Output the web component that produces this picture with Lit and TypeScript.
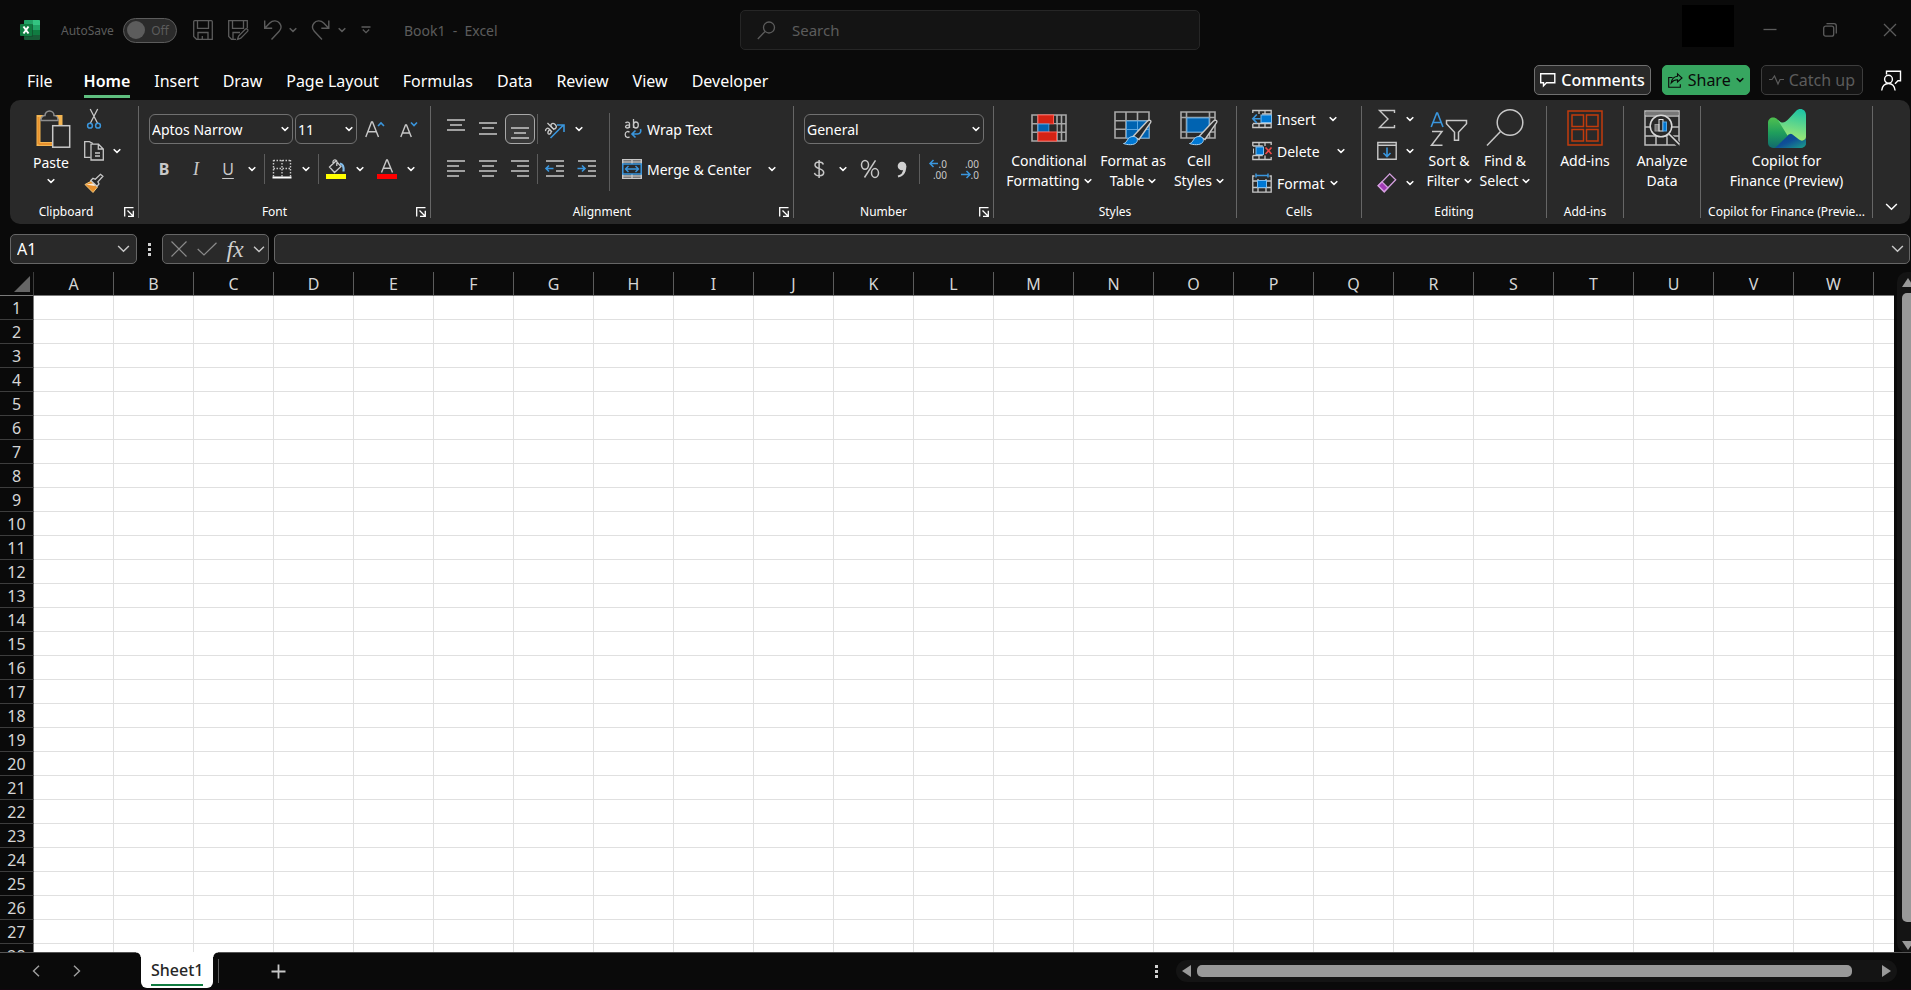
import { LitElement, html, css, svg } from "lit";
import { customElement } from "lit/decorators.js";

const chev = (w = 8) => html`<svg class="chev" width=${w} height=${w * 0.75} viewBox="0 0 8 6" aria-hidden="true">
  <path d="M.7 1.2 4 4.4 7.3 1.2" fill="none" stroke="currentColor" stroke-width=${w > 8 ? 0.9 : 1.5} /></svg>`;

const icon = (w: number, h: number, body: unknown) =>
  html`<svg width=${w} height=${h} viewBox="0 0 ${w} ${h}" fill="none" stroke="currentColor" aria-hidden="true">${body}</svg>`;

const BLUE = "#3a96dd";
const FILL = "#0063b1";
const INK = "#292929";

const icons = {
  excel: icon(20, 20, svg`<g stroke="none">
    <rect x="4" y="0" width="16" height="20" rx="1" fill="#185c37"/><path d="M4 1a1 1 0 0 1 1-1h7.500v5H4z" fill="#21a366"/>
    <path d="M12.500 0H19a1 1 0 0 1 1 1v4h-7.500z" fill="#33c481"/><path d="M4 5h8.500v5H4z" fill="#107c41"/>
    <path d="M12.500 5H20v5h-7.500z" fill="#21a366"/><path d="M12.500 10H20v5h-7.500z" fill="#107c41"/>
    <path d="M4 4h9v13H4z" fill="#0b4a2a" opacity=".5"/>
    <rect x="0" y="4" width="12" height="12" rx="1" fill="#107c41"/></g>
    <path d="M3.500 6.500 8.500 13.500M8.500 6.500 3.500 13.500" stroke="#fff" stroke-width="2"/>`),
  save: icon(20, 20, svg`<path d="M.7 1.700a1 1 0 0 1 1-1h16.600a1 1 0 0 1 1 1v17.600H3.500L.7 16.500z M4.500.7v7.600h11V.7M5 19.300v-6.800h10v6.800M9.300 19v-3" stroke-width="1.300"/>`),
  saveEdit: icon(20, 20, svg`<path d="M19.300 8V.7H.7v15.800l2.800 2.800H8M4.500.7v7.600h11V.7M5 19.300v-6.800h7" stroke-width="1.300"/>
    <path d="M9.500 19.500 10.600 16 17.500 9a1.600 1.600 0 0 1 2.200 2.200L12.800 18.200z" stroke-width="1.300"/>`),
  undo: icon(20, 20, svg`<path d="M1.700.5v7.700h7.500M2 8 6.800 3C10-.2 14.500.6 16.600 3.200c2 2.600 1.800 5.600-.4 8L8.500 19.500" stroke-width="1.400"/>`),
  redo: icon(20, 20, svg`<path d="M16.800.5v7.700H9.300M16.500 8 11.700 3C8.500-.2 4 .6 1.900 3.200c-2 2.600-1.800 5.600.4 8L10 19.500" stroke-width="1.400"/>`),
  custom: icon(10, 8, svg`<path d="M.5 1h9M1.800 3.500 5 6.700 8.200 3.500" stroke-width="1.300"/>`),
  search: icon(19, 19, svg`<circle cx="12" cy="6.500" r="5.500" stroke-width="1.300"/><path d="M8 10.500.8 18" stroke-width="1.300"/>`),
  min: icon(14, 14, svg`<path d="M.5 6.500h13" stroke-width="1.300"/>`),
  restore: icon(14, 14, svg`<rect x=".7" y="3.200" width="10" height="10" rx="2" stroke-width="1.300"/><path d="M3.500.7H11A2.300 2.300 0 0 1 13.300 3v7.500" stroke-width="1.300"/>`),
  close: icon(14, 14, svg`<path d="M1 1l12 12M13 1 1 13" stroke-width="1.300"/>`),
  comment: icon(16, 16, svg`<path d="M.7 1.700h14.100v9H6.500l-3 3v-3H.7z" stroke-width="1.400"/>`),
  share: icon(15, 15, svg`<path d="M4.500 4.500H.7v9.800h11.600v-3M9.500.8 14 5 9.500 9V6.700C6.500 6.700 5 7.500 3.200 9.800 3.800 6 6 3.500 9.500 3.200z" stroke-width="1.100"/>`),
  pulse: icon(15, 12, svg`<path d="M0 5.500h3L5.500 2 9 10l2-4.500h4" stroke-width="1.200"/>`),
  person: icon(20, 21, svg`<path d="M5.500 4.500V1.200h14v9.600H17l-3 3" stroke-width="1.400"/><circle cx="7.500" cy="9.200" r="3.900" stroke-width="1.400"/><path d="M.7 20.500c.6-4.500 3-7 6.800-7s6 2.500 6.600 7" stroke-width="1.400"/>`),
  paste: icon(36, 38, svg`<rect x="2.500" y="7" width="22" height="27" stroke="#f3b552" stroke-width="4"/>
    <path d="M5 10.500V9.500a4 4 0 0 1 4-4 4.500 4.500 0 0 1 9 0 4 4 0 0 1 4 4v1z" fill="${INK}" stroke="#8e8e8e" stroke-width="1.500"/>
    <path d="M2.500 7v27M2.500 34h14" stroke="#e8912d" stroke-width="2"/>
    <rect x="16.700" y="15.700" width="17" height="21.500" fill="${INK}" stroke="#c8c8c8" stroke-width="1.500"/>`),
  cut: icon(20, 20, svg`<path d="M6.200 0 13.700 14.500M13.700 0 6.200 14.500" stroke="#c8c8c8" stroke-width="1.300"/>
    <circle cx="6" cy="16.700" r="2.400" stroke="${BLUE}" stroke-width="1.500"/><circle cx="14" cy="16.700" r="2.400" stroke="${BLUE}" stroke-width="1.500"/>`),
  copy: icon(20, 20, svg`<path d="M6.500 16.300H.7V.7h4.600L9 2.500" stroke="#c8c8c8" stroke-width="1.300"/>
    <path d="M7 3.200h7.500l4.800 4.800v11H7z M14.300 3.200V8h5M11 12h5M11 15h5" stroke="#c8c8c8" stroke-width="1.300"/>`),
  painter: icon(20, 20, svg`<path d="M1 11.500 7.500 8l6 6-4.500 5.500z" fill="#e8912d" stroke="#f3c77b" stroke-width="1"/><path d="M2 11.500 12 10l-1.500 3z" fill="#fff" opacity=".8" stroke="none"/>
    <path d="M6.800 7.500 9 5.300l2.300 1 5.200-5 2.400 2-5 5.500L15 11l-2 2.300z" fill="${INK}" stroke="#c8c8c8" stroke-width="1.300"/>`),
  launch: icon(10, 10, svg`<path d="M.7 9.500V.7h8.800M3.500 3.500l5 5M9.300 3.800v5.500H4" stroke-width="1.300"/>`),
  grow: icon(20, 20, svg`<path d="M.8 18 6.500 3h1L13.500 18M3 12.700h8.500" stroke="#c8c8c8" stroke-width="1.400"/><path d="M13 7l3-3 3 3" stroke="${BLUE}" stroke-width="1.600"/>`),
  shrink: icon(20, 20, svg`<path d="M1.800 18 6.500 6h1L12.300 18M3.500 14h7" stroke="#c8c8c8" stroke-width="1.400"/><path d="M12 3.500l3 3 3-3" stroke="${BLUE}" stroke-width="1.600"/>`),
  borders: icon(20, 20, svg`<path d="M1.500 1.500h17M1.500 9.500h17M1.500 1v17M10 1v17M18.500 1v17" stroke="#c8c8c8" stroke-width="1.400" stroke-dasharray="1.500 1.500"/><path d="M.5 18.500h19" stroke="#fff" stroke-width="2"/>`),
  bucket: icon(20, 20, svg`<rect x="0" y="15" width="20" height="5" fill="#ff0" stroke="none"/>
    <path d="M3.500 8 10 2l5 5.500-6.500 6z M7 6V2.500A2 2 0 0 1 10.800 2v5" stroke="#c8c8c8" stroke-width="1.300"/><path d="M14 4.500c3 .5 4 3.500 3.500 8" stroke="#83beec" stroke-width="2.200"/>`),
  fontColor: icon(20, 20, svg`<rect x="0" y="15" width="20" height="5" fill="#f00" stroke="none"/><path d="M4.500 13.500 9.600 1h.8l5.100 12.500M6.300 9.200h7.400" stroke="#c8c8c8" stroke-width="1.400"/>`),
  orient: icon(22, 20, svg`<path d="M6.500 19 19 6.500M13 6h7v7" stroke="${BLUE}" stroke-width="1.600"/>
    <g transform="rotate(-45 7 9)" stroke="#c8c8c8" stroke-width="1.300"><path d="M1 7.300c1-1.500 4-1.400 4 .8V12.500M5 9.200c-5 0-5 3.300-2.300 3.300 1.400 0 2.300-1 2.300-2.300M8 3v9.500"/><ellipse cx="10.200" cy="9.500" rx="2.200" ry="3"/></g>`),
  wrap: icon(20, 20, svg`<g stroke="#c8c8c8" stroke-width="1.300"><path d="M3.500 4c1-1.300 4-1.300 4 .8V9M7.500 5.800c-5 0-4.600 3.200-2.200 3.200 1.300 0 2.200-1 2.200-2.200M11.500 0v9"/><ellipse cx="13.900" cy="6" rx="2.400" ry="3"/><path d="M7.500 13.300c-1.500-1.500-4.300-.7-4.300 2.200s2.800 3.700 4.300 2.200"/></g>
    <path d="M18.500 10c1 3-.5 5-3 5h-5M13.500 11.500 10 15l3.500 3.500" stroke="${BLUE}" stroke-width="1.600"/>`),
  merge: icon(20, 20, svg`<path d="M.7.700h18.600v18.600H.7zM10 .7V5M10 15v4.300M.7 3h18.600M.7 17h18.600" stroke="#c8c8c8" stroke-width="1.400"/>
    <rect x=".8" y="5" width="18.400" height="10" fill="${INK}" stroke="${BLUE}" stroke-width="1.500"/><path d="M3.500 10h13M6.500 7l-3 3 3 3M13.500 7l3 3-3 3" stroke="${BLUE}" stroke-width="1.400"/>`),
  percent: icon(20, 20, svg`<ellipse cx="5" cy="5.800" rx="3.500" ry="4.400" stroke="#c8c8c8" stroke-width="1.500"/><ellipse cx="15" cy="14" rx="3.500" ry="4.400" stroke="#c8c8c8" stroke-width="1.500"/><path d="M15.500 1.300 4.500 18.500" stroke="#c8c8c8" stroke-width="1.500"/>`),
  dollar: icon(12, 20, svg`<path d="M10.300 5.500C9.600 2.300 2 1.700 2 5.900c0 4.300 8.700 3.200 8.700 7.700 0 4.300-8.400 4.100-9.200.3M6.100 1v18" stroke="#c8c8c8" stroke-width="1.500"/>`),
  comma: icon(12, 18, svg`<path d="M2 16.500c4-1 6-3 6.500-6" stroke="#d0d0d0" stroke-width="2"/><circle cx="6" cy="6" r="4.300" fill="#d0d0d0" stroke="none"/><path d="M10.300 6c0 4-1 7.500-5 9.500l2-6z" fill="#d0d0d0" stroke="none"/>`),
  cond: icon(36, 28, svg`<path d="M1 1h34v26H1zM1 9.700h34M1 18.300h34M7 1v26M26 1v26M30.500 1v26" stroke="#a8a8a8" stroke-width="1.600"/>
    <rect x="7" y="1" width="15.500" height="9" fill="#d42314" stroke="#ff5a50"/><rect x="7" y="10" width="11" height="8" fill="${FILL}" stroke="#59a5e0"/><rect x="18.500" y="10.500" width="7" height="7.300" fill="${INK}" stroke="none"/><rect x="7" y="18" width="18.500" height="9" fill="#d42314" stroke="#ff5a50"/>`),
  table: icon(38, 34, svg`<path d="M1 1h34v26H1zM1 9.700h34M1 18.300h34M12 1v26M23.500 1v26" stroke="#a8a8a8" stroke-width="1.600"/>
    <rect x="12.500" y="10" width="22.500" height="17" fill="${FILL}" stroke="#59a5e0"/><path d="M12.500 18.500H35M23.500 10v17" stroke="#59a5e0"/>
    <path d="M19 25.500 33 10.500c2-2 5-1.500 3.500 1.200L25 28.500z" fill="${INK}" stroke="#c8c8c8" stroke-width="1.400"/><path d="M9.500 32.500c4-.5 3.500-7 9.500-7 4 0 5.500 3.500 3.500 6-2.500 3-9 2.500-13 1z" fill="#0078d4" stroke="#a9d3f2" stroke-width="1"/>`),
  cell: icon(38, 34, svg`<path d="M1 1h34v26H1zM6.500 1v26M1 6.500h34M1 21h34M29.500 1v26" stroke="#a8a8a8" stroke-width="1.600"/>
    <rect x="7" y="7" width="22" height="14" fill="${FILL}" stroke="#59a5e0"/>
    <path d="M19 25.500 33 10.500c2-2 5-1.500 3.500 1.200L25 28.500z" fill="${INK}" stroke="#c8c8c8" stroke-width="1.400"/><path d="M9.500 32.500c4-.5 3.500-7 9.500-7 4 0 5.500 3.500 3.500 6-2.500 3-9 2.500-13 1z" fill="#0078d4" stroke="#a9d3f2" stroke-width="1"/>`),
  insert: icon(20, 20, svg`<path d="M.8 4V1.500h18.400v17H.8V15M7 1.500V5M13 1.500V5M7 14.500v4M13 14.500v4M.8 14.500h18.400M10 5h9" stroke="#c8c8c8" stroke-width="1.300"/>
    <rect x="9" y="6" width="10.500" height="7.500" fill="#0078d4" stroke="#7dbdf0"/><path d="M.8 9.700h8M4.800 5.500.8 9.700l4 4.200" stroke="${BLUE}" stroke-width="1.600"/>`),
  del: icon(20, 20, svg`<path d="M.8 5V1.500h18.400V4M.8 14.500v4h18.400V16M7 1.500V5M13 1.500V5M7 14.500v4M13 14.500v4M.8 5h10M.8 14.500h10" stroke="#c8c8c8" stroke-width="1.300"/>
    <rect x="4" y="6" width="7.500" height="7.500" fill="#0078d4" stroke="#7dbdf0"/><path d="M1.500 7.500v5" stroke="#c8c8c8"/><path d="M13.500 6.500l6 6.500M19.500 6.500l-6 6.500" stroke="#f04a4a" stroke-width="1.600"/>`),
  format: icon(20, 20, svg`<path d="M4 .5v4M16 .5v4M4 2.500h12" stroke="${BLUE}" stroke-width="1.500"/><path d="M2.500 3H.8v16.200h18.400V3h-1.700M6 6v13M14 6v13M.8 8h18.400M.8 14.500h18.400" stroke="#c8c8c8" stroke-width="1.300"/>
    <rect x="5.500" y="7.500" width="9" height="7" fill="#0078d4" stroke="#7dbdf0"/>`),
  sigma: icon(20, 20, svg`<path d="M17.500 4V1.500h-15L11 10 2.500 18.500h15V16" stroke="#c8c8c8" stroke-width="1.400"/>`),
  fillDown: icon(20, 20, svg`<path d="M.8 1.500h18.400v16.800H.8zM.8 4.300h18.400" stroke="#c8c8c8" stroke-width="1.400"/><path d="M10 6.500v9M6.500 12l3.500 3.500 3.500-3.500" stroke="${BLUE}" stroke-width="1.600"/>`),
  eraser: icon(20, 20, svg`<path d="M1.200 12.800 12.700.9l6 5.800L7.200 18.700z" stroke="#d59fe0" stroke-width="1.300"/><path d="M1.200 12.800 5 8.900l6 5.800-3.800 4z" fill="#a13bb5" stroke="#d59fe0" stroke-width="1.300"/>`),
  sort: icon(38, 36, svg`<path d="M1.200 17 6.700 3h.8L13 17M3.200 12.500H11" stroke="${BLUE}" stroke-width="1.600"/><path d="M2 21.500h10L1.500 35.200H12.500" stroke="#c8c8c8" stroke-width="1.500"/>
    <path d="M16.500 10.500h20v3.300l-8 8.500v8h-4v-8l-8-8.500z" stroke="#c8c8c8" stroke-width="1.500"/>`),
  find: icon(38, 38, svg`<circle cx="24" cy="13.500" r="12.800" stroke="#c8c8c8" stroke-width="1.500"/><path d="M14.500 22.500 1 36.500" stroke="#c8c8c8" stroke-width="1.500"/>`),
  addins: icon(36, 36, svg`<g stroke="#c23b0c" stroke-width="1.500"><rect x="1" y="1" width="34" height="34"/><rect x="5" y="5" width="11.500" height="11.500"/><rect x="19.500" y="5" width="11.500" height="11.500"/><rect x="5" y="19.500" width="11.500" height="11.500"/><rect x="19.500" y="19.500" width="11.500" height="11.500"/></g>`),
  analyze: icon(36, 36, svg`<path d="M1 1h34v34H1zM1 6h34M1 17h34M1 26h34M12 26v9M23 26v9" stroke="#bdbdbd" stroke-width="1.500"/><path d="M1.500 3.500h33" stroke="#777" stroke-width="3"/>
    <path d="M25 25 35.500 35.500" stroke="${INK}" stroke-width="5"/><circle cx="17" cy="16" r="10.800" fill="${INK}" stroke="#d8d8d8" stroke-width="1.500"/><path d="M25 24 35.500 34.500" stroke="#d8d8d8" stroke-width="1.600"/>
    <rect x="11" y="14.500" width="4" height="6.500" fill="#777" stroke="#999"/><rect x="15" y="9.500" width="4" height="11.500" stroke="#e8e8e8"/><rect x="19" y="12" width="3.500" height="9" fill="#0078d4" stroke="#59a5e0"/>`),
  copilot: icon(38, 39, svg`<defs>
    <linearGradient id="l" x1="0" y1="0" x2="0" y2="1"><stop offset="0" stop-color="#4fc04f"/><stop offset=".5" stop-color="#1f9e5c"/><stop offset="1" stop-color="#116a6e"/></linearGradient>
    <linearGradient id="r" x1=".7" y1="0" x2=".5" y2="1"><stop offset="0" stop-color="#1cc3a4"/><stop offset="1" stop-color="#a6ea72"/></linearGradient>
    <linearGradient id="b" x1="0" y1="0" x2="1" y2="1"><stop offset="0" stop-color="#0a3f8f"/><stop offset=".5" stop-color="#0f4f96"/><stop offset="1" stop-color="#1ca08a"/></linearGradient></defs>
    <g stroke="none"><path d="M0 14C0 8.500 6 7 9.500 10.500L38 34a5 5 0 0 1-5 5H5a5 5 0 0 1-5-5z" fill="url(#l)"/>
    <path d="M7 39 20 26.500c3-3 5-2 8 1l3.500 3c2.500 2 6.500.5 6.500-2V34a5 5 0 0 1-5 5z" fill="url(#b)"/>
    <path d="M9.500 10.500c4 4.500 7 4 11.500-1L28 2c4-4 10-1.500 10 4v22c0 3-4 5-7 2.500L24.500 25.500c-2-1.500-4 0-5 1L9.500 10.500z" fill="url(#r)"/></g>`),
  cross: icon(18, 18, svg`<path d="M1.500 1.500l15 15M16.500 1.500l-15 15" stroke-width="1.200"/>`),
  tick: icon(20, 14, svg`<path d="M.7 7 7 13 19.500.7" stroke-width="1.200"/>`),
  plus: icon(15, 15, svg`<path d="M7.500.5v14M.5 7.500h14" stroke-width="1.800"/>`),
  prev: icon(8, 12, svg`<path d="M7 .7 1.500 6 7 11.300" stroke-width="1.400"/>`),
  next: icon(8, 12, svg`<path d="M1 .7 6.500 6 1 11.300" stroke-width="1.400"/>`),
};

/** Stack of rules used by the alignment icons: each entry is [x1, x2, y]. */
const lines = (rows: number[][], extra: unknown = "") =>
  icon(20, 20, svg`${rows.map(([a, b, y]) => svg`<path d="M${a} ${y}H${b}" stroke="#c8c8c8" stroke-width="1.500"/>`)}${extra}`);

const indent = (dir: string) =>
  lines([[1, 19, 2], [11, 19, 7], [11, 19, 12], [1, 19, 17]], svg`<path d=${dir} stroke=${BLUE} stroke-width="1.600"/>`);

const align = {
  top: lines([[1, 19, 1], [4, 16, 6], [1, 19, 11]]),
  middle: lines([[1, 19, 4], [4, 16, 9], [1, 19, 15]]),
  bottom: lines([[1, 19, 9], [4, 16, 14], [1, 19, 19]]),
  left: lines([[1, 19, 2], [1, 13, 7], [1, 19, 12], [1, 13, 17]]),
  center: lines([[1, 19, 2], [4, 16, 7], [1, 19, 12], [4, 16, 17]]),
  right: lines([[1, 19, 2], [7, 19, 7], [1, 19, 12], [7, 19, 17]]),
  outdent: indent("M8.500 9.500H1M4 6.500l-3 3 3 3"),
  indent: indent("M.5 9.500H8M5 6.500l3 3-3 3"),
};

const TABS = ["File", "Home", "Insert", "Draw", "Page Layout", "Formulas", "Data", "Review", "View", "Developer"];
const COLUMNS = Array.from("ABCDEFGHIJKLMNOPQRSTUVWX");
const ROWS = Array.from({ length: 28 }, (_, i) => i + 1);

const base = css`
  * { box-sizing: border-box; }
  button, input, select { font: inherit; color: inherit; background: none; border: 0; padding: 0; margin: 0; outline: 0; }
  button { display: inline-flex; align-items: center; justify-content: center; white-space: nowrap; }
  svg { display: block; flex: none; overflow: visible; }
`;

@customElement("title-bar")
class TitleBar extends LitElement {
  static styles = [base, css`
    :host { display: grid; grid-template-columns: minmax(0, 740fr) minmax(0, 460fr) minmax(0, 711fr); align-items: center; height: 60px; color: #5c5c5c; }
    .left { display: flex; align-items: center; padding-left: 20px; }
    .auto { display: flex; align-items: center; gap: 9px; margin: 0 16px 0 21px; font-size: 12px; }
    .switch { display: grid; width: 54px; height: 25px; align-items: center; font-size: 12px; }
    .switch > * { grid-area: 1 / 1; }
    .switch input { appearance: none; width: 54px; height: 25px; border: 1px solid #5c5c5c; border-radius: 13px; background: #2b2b2b; }
    .knob { width: 18px; height: 18px; margin-left: 4px; border-radius: 50%; background: #5c5c5c; }
    .off { justify-self: end; padding-right: 8px; }
    .quick { display: flex; align-items: center; gap: 15px; }
    .pair { display: flex; align-items: center; gap: 6px; }
    .name { margin: 0 0 0 33px; font-size: 14px; font-weight: 400; white-space: pre; }
    .search { display: flex; align-items: center; gap: 16px; height: 40px; padding: 0 16px; border: 1px solid #262626; border-radius: 5px; background: #141414; font-size: 15px; line-height: 20px; }
    .search input { flex: 1; min-width: 0; }
    .search input::placeholder { color: #5c5c5c; opacity: 1; }
    .right { display: flex; justify-content: flex-end; align-items: center; height: 60px; padding-right: 14px; gap: 46px; }
    .account { width: 52px; height: 42px; margin: 0 -17px 8px 0; background: #000; }
  `];

  render() {
    return html`
      <div class="left">
        ${icons.excel}
        <label class="auto">AutoSave
          <span class="switch"><input type="checkbox" role="switch" /><span class="knob"></span><span class="off">Off</span></span>
        </label>
        <div class="quick">
          <button aria-label="Save">${icons.save}</button>
          <button aria-label="Save as">${icons.saveEdit}</button>
          <div class="pair"><button aria-label="Undo">${icons.undo}</button><button aria-label="Undo list">${chev()}</button></div>
          <div class="pair"><button aria-label="Redo">${icons.redo}</button><button aria-label="Redo list">${chev()}</button></div>
          <button aria-label="Customize toolbar">${icons.custom}</button>
        </div>
        <h1 class="name">Book1  -  Excel</h1>
      </div>
      <label class="search">${icons.search}<input type="text" placeholder="Search" aria-label="Search" /></label>
      <div class="right">
        <div class="account"></div>
        <button aria-label="Minimize">${icons.min}</button>
        <button aria-label="Restore">${icons.restore}</button>
        <button aria-label="Close">${icons.close}</button>
      </div>`;
  }
}

@customElement("tab-row")
class TabRow extends LitElement {
  static styles = [base, css`
    :host { display: flex; align-items: center; justify-content: space-between; height: 40px; color: #fff; }
    nav { display: flex; gap: 24px; padding-left: 27px; font-size: 16px; line-height: 24px; }
    a { color: inherit; text-decoration: none; padding: 7px 0 2px; border-bottom: 3px solid transparent; white-space: nowrap; }
    a:first-child { margin-right: 7px; }
    .current { font-weight: 600; border-bottom-color: #5fbf7f; }
    .actions { display: flex; align-items: center; gap: 11px; padding-right: 10px; font-size: 16px; }
    .act { height: 30px; gap: 5px; padding: 0 5px; border: 1px solid #707070; border-radius: 5px; background: #292929; }
    .comments { font-weight: 500; }
    .share { background: #37a660; border-color: #37a660; color: #0a0a0a; }
    .catch { background: #141414; border-color: #3d3d3d; color: #5c5c5c; padding: 0 7px; }
    .person { margin-left: 7px; }
  `];

  render() {
    return html`
      <nav>${TABS.map((t) => html`<a href="#" class=${t === "Home" ? "current" : ""}>${t}</a>`)}</nav>
      <div class="actions">
        <button class="act comments">${icons.comment}Comments</button>
        <button class="act share">${icons.share}Share${chev()}</button>
        <button class="act catch">${icons.pulse}Catch up</button>
        <button class="person" aria-label="Presence">${icons.person}</button>
      </div>`;
  }
}

@customElement("ribbon-bar")
class RibbonBar extends LitElement {
  static styles = [base, css`
    :host { display: flex; margin: 0 1px 0 10px; padding: 6px 0; border-radius: 10px; background: #292929; color: #fff; font-size: 14px; }
    .group { display: flex; flex: none; flex-direction: column; height: 112px; border-right: 1px solid #666; }
    .body { display: flex; flex: 1; min-height: 0; }
    .foot { display: flex; align-items: center; height: 16px; margin-bottom: -2px; font-size: 12px; line-height: 16px; }
    .foot span { flex: 1; min-width: 0; text-align: center; white-space: nowrap; }
    .launch { width: 20px; height: 16px; padding-left: 2px; }
    .g-clip { width: 129px; padding-left: 4px; }
    .g-font { width: 292px; }
    .g-align { width: 363px; }
    .g-num { width: 200px; }
    .g-styles { width: 243px; }
    .g-cells { width: 125px; }
    .g-edit { width: 185px; }
    .g-one { width: 77px; }
    .g-copilot { width: 172px; }
    .rows { display: flex; flex-direction: column; gap: 10px; padding: 8px 0 0 10px; }
    .row { display: flex; align-items: center; gap: 2px; height: 30px; }
    .ib { width: 30px; height: 30px; flex: none; }
    .wide { width: 32px; }
    .cb { width: 14px; height: 30px; flex: none; }
    .on { border: 1px solid #a8a8a8; border-radius: 6px; background: #383838; }
    .sep { width: 1px; height: 30px; background: #5c5c5c; }
    .push { margin-left: 3px; }
    .tall { width: 1px; height: 78px; margin: 7px 0 0 7px; background: #5c5c5c; }
    .cmds { padding-left: 12px; }
    .cmd { gap: 5px; height: 26px; }
    .cmd .chev { margin-left: 12px; }
    .cmd.mid .chev { margin-left: 8px; }
    .cmd.tight .chev { margin-left: 0; }
    .stack { display: flex; flex-direction: column; align-items: flex-start; gap: 6px; }
    .stack .row { height: 26px; gap: 6px; }
    .clips { padding-left: 1px; }
    .indent { padding-left: 15px; }
    .big { flex-direction: column; justify-content: flex-start; padding-top: 4px; line-height: 20px; width: 56px; }
    .pic { display: flex; align-items: center; justify-content: center; height: 36px; margin-bottom: 5px; }
    .line { display: flex; align-items: center; gap: 4px; }
    .paste { width: 64px; margin-left: 5px; }
    .paste .pic { height: 38px; padding-left: 6px; }
    .paste .chev { margin-top: 5px; }
    .w90 { width: 90px; }
    .w78 { width: 78px; }
    .w54 { width: 54px; }
    .fill { width: 100%; }
    .stylesbody { padding-left: 10px; }
    .editbody { padding-left: 15px; }
    .editbody .stack { margin-right: 4px; }
    .pick { display: grid; height: 30px; align-items: center; border: 1px solid #707070; border-radius: 6px; font-size: 14px; }
    .pick > * { grid-area: 1 / 1; }
    .pick select { appearance: none; height: 28px; width: 100%; padding-left: 2px; }
    .pick .chev { justify-self: end; margin-right: 3px; pointer-events: none; }
    .face { width: 144px; }
    .size { width: 62px; }
    .numfmt { width: 180px; }
    .glyph { color: #c8c8c8; font-size: 16px; }
    .b { font-weight: 700; }
    .i { font-style: italic; font-family: "Liberation Serif", serif; font-size: 18px; }
    .u { text-decoration: underline; text-underline-offset: 3px; }
    .dec { display: grid; gap: 1px; color: #c8c8c8; font-size: 10px; line-height: 10px; text-align: right; width: 20px; }
    .dec .r { display: flex; justify-content: flex-end; align-items: center; }
    .end { display: flex; flex: 1; justify-content: center; align-items: flex-end; padding-bottom: 6px; }
  `];

  private group(cls: string, name: string, body: unknown, launcher = false) {
    return html`<section class="group ${cls}" aria-label=${name || "Analysis"}>
      <div class="body">${body}</div>
      <div class="foot"><span>${name}</span>${launcher ? html`<button class="launch" aria-label="${name} settings">${icons.launch}</button>` : ""}</div>
    </section>`;
  }

  private ib(label: string, pic: unknown, cls = "") {
    return html`<button class="ib ${cls}" aria-label=${label}>${pic}</button>`;
  }

  private cb(label: string) {
    return html`<button class="cb" aria-label="${label} options">${chev()}</button>`;
  }

  private big(pic: unknown, first: string, second = "", menu = false, cls = "") {
    return html`<button class="big ${cls}"><span class="pic">${pic}</span><span>${first}</span>
      <span class="line">${second}${menu ? chev() : ""}</span></button>`;
  }

  private pick(id: string, label: string, value: string) {
    return html`<div class="pick ${id}"><select aria-label=${label}><option>${value}</option></select>${chev()}</div>`;
  }

  render() {
    const left = svg`<path d="M9 4.500H1M4.500 1 1 4.500 4.500 8" stroke=${BLUE} stroke-width="1.500"/>`;
    const right = svg`<path d="M0 4.500h9M5.500 1 9 4.500 5.500 8" stroke=${BLUE} stroke-width="1.500"/>`;
    return html`
      ${this.group("g-clip", "Clipboard", html`
        <button class="big paste"><span class="pic">${icons.paste}</span><span>Paste</span>${chev()}</button>
        <div class="stack clips">
          <div class="row"><button aria-label="Cut">${icons.cut}</button></div>
          <div class="row"><button aria-label="Copy">${icons.copy}</button>${this.cb("Copy")}</div>
          <div class="row"><button aria-label="Format painter">${icons.painter}</button></div>
        </div>`, true)}
      ${this.group("g-font", "Font", html`<div class="rows">
        <div class="row">${this.pick("face", "Font", "Aptos Narrow")}${this.pick("size", "Font size", "11")}
          ${this.ib("Increase font size", icons.grow, "wide")}${this.ib("Decrease font size", icons.shrink, "wide")}</div>
        <div class="row">${this.ib("Bold", html`<span class="glyph b">B</span>`)}${this.ib("Italic", html`<span class="glyph i">I</span>`)}
          ${this.ib("Underline", html`<span class="glyph u">U</span>`)}${this.cb("Underline")}
          <span class="sep push"></span>${this.ib("Borders", icons.borders)}${this.cb("Borders")}
          <span class="sep push"></span>${this.ib("Fill color", icons.bucket)}${this.cb("Fill color")}
          ${this.ib("Font color", icons.fontColor, "push")}${this.cb("Font color")}</div>
      </div>`, true)}
      ${this.group("g-align", "Alignment", html`
        <div class="rows">
          <div class="row">${this.ib("Top align", align.top)}${this.ib("Middle align", align.middle)}${this.ib("Bottom align", align.bottom, "on")}
            <span class="sep"></span>${this.ib("Orientation", icons.orient)}${this.cb("Orientation")}</div>
          <div class="row">${this.ib("Align left", align.left)}${this.ib("Center", align.center)}${this.ib("Align right", align.right)}
            <span class="sep"></span>${this.ib("Decrease indent", align.outdent)}${this.ib("Increase indent", align.indent)}</div>
        </div>
        <span class="tall"></span>
        <div class="rows cmds">
          <div class="row"><button class="cmd">${icons.wrap}Wrap Text</button></div>
          <div class="row"><button class="cmd">${icons.merge}Merge &amp; Center${chev()}</button></div>
        </div>`, true)}
      ${this.group("g-num", "Number", html`<div class="rows">
        <div class="row">${this.pick("numfmt", "Number format", "General")}</div>
        <div class="row">${this.ib("Currency", icons.dollar)}${this.cb("Currency")}${this.ib("Percent", icons.percent, "push")}
          ${this.ib("Comma style", icons.comma)}<span class="sep"></span>
          ${this.ib("Increase decimal", html`<span class="dec"><span class="r">${icon(10, 9, left)}.0</span><span>.00</span></span>`)}
          ${this.ib("Decrease decimal", html`<span class="dec"><span>.00</span><span class="r">${icon(10, 9, right)}.0</span></span>`)}</div>
      </div>`, true)}
      ${this.group("g-styles", "Styles", html`<div class="body stylesbody">
        ${this.big(icons.cond, "Conditional", "Formatting", true, "w90")}
        ${this.big(icons.table, "Format as", "Table", true, "w78")}
        ${this.big(icons.cell, "Cell", "Styles", true, "w54")}</div>`)}
      ${this.group("g-cells", "Cells", html`<div class="stack indent">
        <button class="cmd mid">${icons.insert}Insert${chev()}</button>
        <button class="cmd">${icons.del}Delete${chev()}</button>
        <button class="cmd tight">${icons.format}Format${chev()}</button></div>`)}
      ${this.group("g-edit", "Editing", html`<div class="body editbody">
        <div class="stack">
          <div class="row"><button aria-label="AutoSum">${icons.sigma}</button>${this.cb("AutoSum")}</div>
          <div class="row"><button aria-label="Fill">${icons.fillDown}</button>${this.cb("Fill")}</div>
          <div class="row"><button aria-label="Clear">${icons.eraser}</button>${this.cb("Clear")}</div>
        </div>
        ${this.big(icons.sort, "Sort &", "Filter", true)}
        ${this.big(icons.find, "Find &", "Select", true)}</div>`)}
      ${this.group("g-one", "Add-ins", this.big(icons.addins, "Add-ins", "", false, "fill"))}
      ${this.group("g-one", "", this.big(icons.analyze, "Analyze", "Data", false, "fill"))}
      ${this.group("g-copilot", "Copilot for Finance (Previe...", this.big(icons.copilot, "Copilot for", "Finance (Preview)", false, "fill"))}
      <div class="end"><button aria-label="Collapse ribbon">${chev(13)}</button></div>`;
  }
}

@customElement("formula-row")
class FormulaRow extends LitElement {
  static styles = [base, css`
    :host { display: flex; align-items: center; height: 30px; margin: 0 1px 0 10px; padding: 10px 0 8px; color: #fff; font-size: 16px; }
    .box { display: flex; align-items: center; height: 30px; border: 1px solid #666; border-radius: 5px; background: #292929; }
    .box .chev { color: #c8c8c8; }
    .name { width: 127px; padding: 0 6px; }
    .name input { flex: 1; min-width: 0; }
    .dots { display: grid; gap: 2px; width: 25px; justify-content: center; }
    .dots i { width: 3px; height: 3px; background: #d0d0d0; }
    .fx { width: 107px; padding: 0 3px 0 7px; justify-content: space-between; color: #8a8a8a; }
    .fn { font: italic 400 24px/24px "Liberation Serif", serif; color: #d0d0d0; }
    .bar { flex: 1; margin-left: 5px; padding: 0 5px; }
    .bar input { flex: 1; min-width: 0; }
  `];

  render() {
    return html`
      <div class="box name"><input aria-label="Name box" value="A1" /><button aria-label="Names">${chev(13)}</button></div>
      <div class="dots"><i></i><i></i><i></i></div>
      <div class="box fx"><button aria-label="Cancel">${icons.cross}</button><button aria-label="Enter">${icons.tick}</button>
        <button class="fn" aria-label="Insert function">fx</button><button aria-label="Functions">${chev(12)}</button></div>
      <div class="box bar"><input aria-label="Formula" /><button aria-label="Expand formula bar">${chev(13)}</button></div>`;
  }
}

@customElement("sheet-grid")
class SheetGrid extends LitElement {
  static styles = [base, css`
    :host { display: flex; flex: 1; min-height: 0; }
    .view { flex: 1; min-width: 0; overflow: hidden; }
    table { table-layout: fixed; width: 1954px; border-spacing: 0; font-size: 16px; line-height: 22px; }
    th, td { height: 24px; padding: 0; }
    th { color: #d6d6d6; font-weight: 400; background: #0a0a0a; text-align: center; }
    td { background: #fff; border-right: 1px solid #e0e0e0; border-bottom: 1px solid #e0e0e0; }
    thead th { border-right: 1px solid #5c5c5c; border-bottom: 1px solid #7a7a7a; }
    tbody th { border-right: 1px solid #7a7a7a; border-bottom: 1px solid #3d3d3d; }
    thead .corner { width: 34px; border-right-color: #3d3d3d; }
    .corner svg { margin-left: 14px; }
    .scroll { display: flex; flex-direction: column; align-items: flex-end; flex: none; width: 14px; margin-left: 3px; padding: 6px 0 3px; gap: 6px; border-radius: 10px 0 0 10px; background: #141414; color: #999; overflow: hidden; }
    .track { flex: 1; width: 9px; }
    .thumb { height: 98%; border-radius: 5px 0 0 5px; background: #999; }
  `];

  render() {
    return html`
      <div class="view"><table>
        <thead><tr><th class="corner" aria-label="Select all"><svg width="16" height="16" viewBox="0 0 16 16"><path d="M16 0v16H0z" fill="#666" /></svg></th>
          ${COLUMNS.map((c) => html`<th scope="col">${c}</th>`)}</tr></thead>
        <tbody>${ROWS.map((r) => html`<tr><th scope="row">${r}</th>${COLUMNS.map(() => html`<td></td>`)}</tr>`)}</tbody>
      </table></div>
      <div class="scroll">
        <svg width="9" height="9" viewBox="0 0 9 9"><path d="M6 0 12 9H0z" fill="currentColor" /></svg>
        <div class="track"><div class="thumb"></div></div>
        <svg width="9" height="9" viewBox="0 0 9 9"><path d="M0 0h12L6 9z" fill="currentColor" /></svg>
      </div>`;
  }
}

@customElement("sheet-tabs")
class SheetTabs extends LitElement {
  static styles = [base, css`
    :host { display: flex; align-items: center; height: 36px; padding-right: 14px; color: #c8c8c8; border-bottom: 1px solid #14060f; box-shadow: 0 -1px #555; }
    .nav { display: flex; gap: 33px; padding-left: 32px; width: 141px; color: #a0a0a0; }
    .tab { position: relative; align-self: flex-start; height: 36px; padding: 0 10px; margin-top: -1px; background: #fff; border-radius: 0 0 6px 6px; color: #262626; font-size: 16px; font-weight: 500; }
    .tab span { border-bottom: 2px solid #107c41; line-height: 24px; padding: 4px 0 2px; }
    .tab::before, .tab::after { content: ""; position: absolute; top: 0; width: 5px; height: 5px; }
    .tab::before { right: 100%; background: radial-gradient(circle at 0 100%, transparent 4px, #fff 5px); }
    .tab::after { left: 100%; background: radial-gradient(circle at 100% 100%, transparent 4px, #fff 5px); }
    .bar { width: 1px; height: 24px; margin: 0 52px 0 5px; background: #5c5c5c; }
    .space { flex: 1; }
    .dots { display: grid; gap: 2px; margin-right: 18px; }
    .dots i { width: 3px; height: 3px; background: #d0d0d0; }
    .scroll { display: flex; align-items: center; flex: 0 1 721px; height: 22px; padding: 0 6px; gap: 6px; border-radius: 11px; background: #141414; color: #999; }
    .track { flex: 1; padding-right: 24px; }
    .thumb { height: 12px; border-radius: 5px; background: #999; }
  `];

  render() {
    return html`
      <div class="nav"><button aria-label="Previous sheet">${icons.prev}</button><button aria-label="Next sheet">${icons.next}</button></div>
      <button class="tab"><span>Sheet1</span></button><span class="bar"></span>
      <button aria-label="New sheet">${icons.plus}</button>
      <div class="space"></div>
      <div class="dots"><i></i><i></i><i></i></div>
      <div class="scroll">
        <svg width="9" height="12" viewBox="0 0 9 12"><path d="M9 0v12L0 6z" fill="currentColor" /></svg>
        <div class="track"><div class="thumb"></div></div>
        <svg width="9" height="12" viewBox="0 0 9 12"><path d="M0 0v12l9-6z" fill="currentColor" /></svg>
      </div>`;
  }
}

@customElement("app-root")
class AppRoot extends LitElement {
  static styles = css`
    :host { display: flex; flex-direction: column; height: 100vh; overflow: hidden; background: #0a0a0a; font-family: "Noto Sans", "Open Sans", sans-serif; }
  `;

  render() {
    return html`<title-bar></title-bar><tab-row></tab-row><ribbon-bar></ribbon-bar><formula-row></formula-row>
      <sheet-grid></sheet-grid><sheet-tabs></sheet-tabs>`;
  }
}
